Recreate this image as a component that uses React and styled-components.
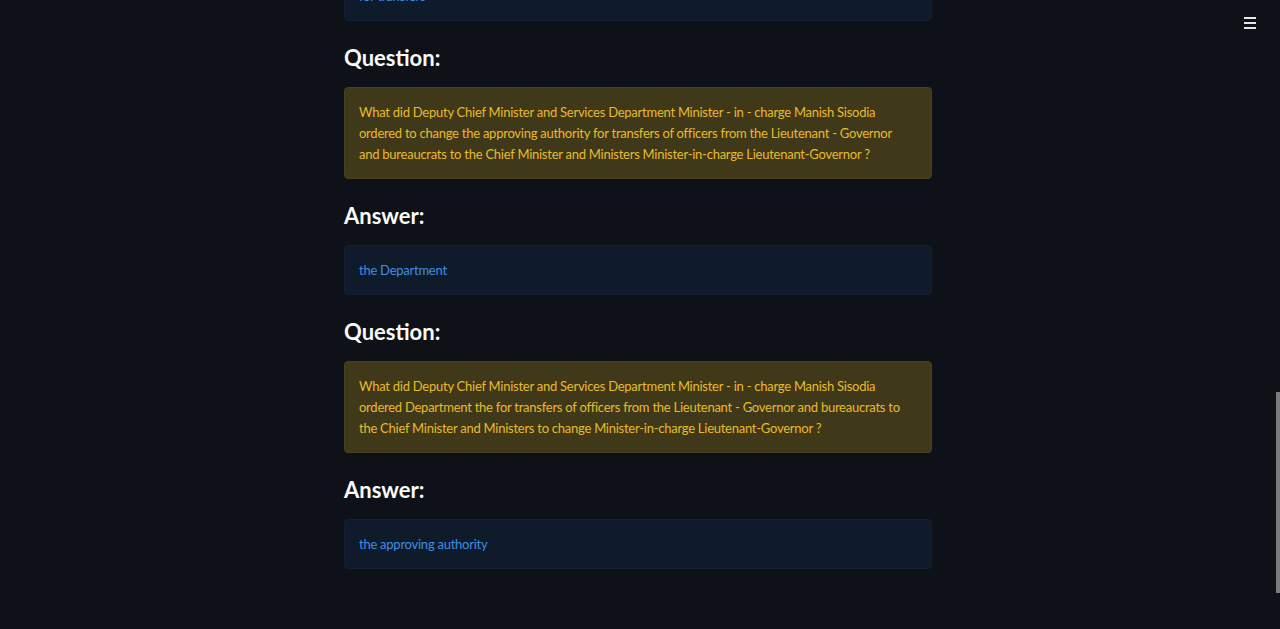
import React, { useLayoutEffect, useRef, useState } from "react";
import styled, { createGlobalStyle } from "styled-components";

const GlobalStyle = createGlobalStyle`
  html, body {
    margin: 0;
    padding: 0;
    background: #0e1117;
    overflow: hidden;
  }
  * {
    box-sizing: border-box;
  }
`;

const Scroller = styled.div`
  height: 100vh;
  overflow-y: auto;
  padding-right: 4px;
  background: #0e1117;
  font-family: Lato, "Open Sans", sans-serif;
  scrollbar-width: none;
  &::-webkit-scrollbar {
    display: none;
  }
`;

const ScrollThumb = styled.div`
  position: fixed;
  right: 0;
  width: 4px;
  background: #7b7b7e;
`;

const MenuButton = styled.button`
  position: fixed;
  top: 17px;
  right: 24px;
  width: 12px;
  padding: 0;
  border: none;
  background: transparent;
  display: flex;
  flex-direction: column;
  gap: 3px;
  cursor: pointer;
`;

const MenuLine = styled.span`
  display: block;
  width: 12px;
  height: 2px;
  background: #e6e6e6;
`;

const Main = styled.main`
  width: 588px;
  margin: 0 auto;
  padding: 130px 0 174px;
  display: flex;
  flex-direction: column;
`;

const Heading = styled.h3`
  margin: 21px 0 13px;
  height: 32px;
  line-height: 32px;
  font-size: 22px;
  font-weight: 700;
  color: #fafafa;
`;

const Alert = styled.div`
  border-radius: 4px;
  padding: 14px 20px 13px 14px;
  font-size: 13px;
  letter-spacing: -0.25px;
  line-height: 21px;
  border: 1px solid ${(p) => (p.$kind === "warning" ? "#48401f" : "#132033")};
  background: ${(p) => (p.$kind === "warning" ? "#3f3919" : "#0f1b2b")};
  color: ${(p) => (p.$kind === "warning" ? "#eab92b" : "#3d8fe0")};
`;

const Q1 =
  "What did Deputy Chief Minister and Services Department Minister - in - charge Manish Sisodia ordered to change the approving authority for transfers of officers from the Lieutenant - Governor and bureaucrats to the Chief Minister and Ministers Minister-in-charge Lieutenant-Governor ?";
const Q2 =
  "What did Deputy Chief Minister and Services Department Minister - in - charge Manish Sisodia ordered Department the for transfers of officers from the Lieutenant - Governor and bureaucrats to the Chief Minister and Ministers to change Minister-in-charge Lieutenant-Governor ?";

const pairs = [
  { q: Q1, a: ["Manish Sisodia"] },
  { q: Q2, a: ["Deputy Chief Minister"] },
  { q: Q1, a: ["the Lieutenant - Governor"] },
  {
    q: Q2,
    a: [
      "officers from the Lieutenant - Governor and bureaucrats to the Chief Minister and Ministers",
      "for transfers",
    ],
  },
  { q: Q1, a: ["the Department"] },
  { q: Q2, a: ["the approving authority"] },
];

const QAPair = ({ q, a }) => (
  <>
    <Heading>Question:</Heading>
    <Alert $kind="warning">{q}</Alert>
    <Heading>Answer:</Heading>
    <Alert $kind="info">
      {a.map((line, i) => (
        <React.Fragment key={"l" + i}>
          {i > 0 && <br />}
          {line}
        </React.Fragment>
      ))}
    </Alert>
  </>
);

export default function App() {
  const ref = useRef(null);
  const [thumb, setThumb] = useState({ top: 0, height: 0 });

  const measure = () => {
    const el = ref.current;
    if (!el) return;
    const h = el.clientHeight;
    setThumb({
      top: (el.scrollTop / el.scrollHeight) * h,
      height: (h * h) / el.scrollHeight,
    });
  };

  useLayoutEffect(() => {
    const el = ref.current;
    if (el) el.scrollTop = el.scrollHeight - el.clientHeight - 114;
    measure();
  }, []);

  return (
    <>
      <GlobalStyle />
      <Scroller ref={ref} onScroll={measure}>
        <Main>
          {pairs.map((p, i) => (
            <QAPair key={"qa" + i} q={p.q} a={p.a} />
          ))}
        </Main>
      </Scroller>
      <ScrollThumb style={{ top: thumb.top, height: thumb.height }} />
      <MenuButton aria-label="menu">
        <MenuLine />
        <MenuLine />
        <MenuLine />
      </MenuButton>
    </>
  );
}
